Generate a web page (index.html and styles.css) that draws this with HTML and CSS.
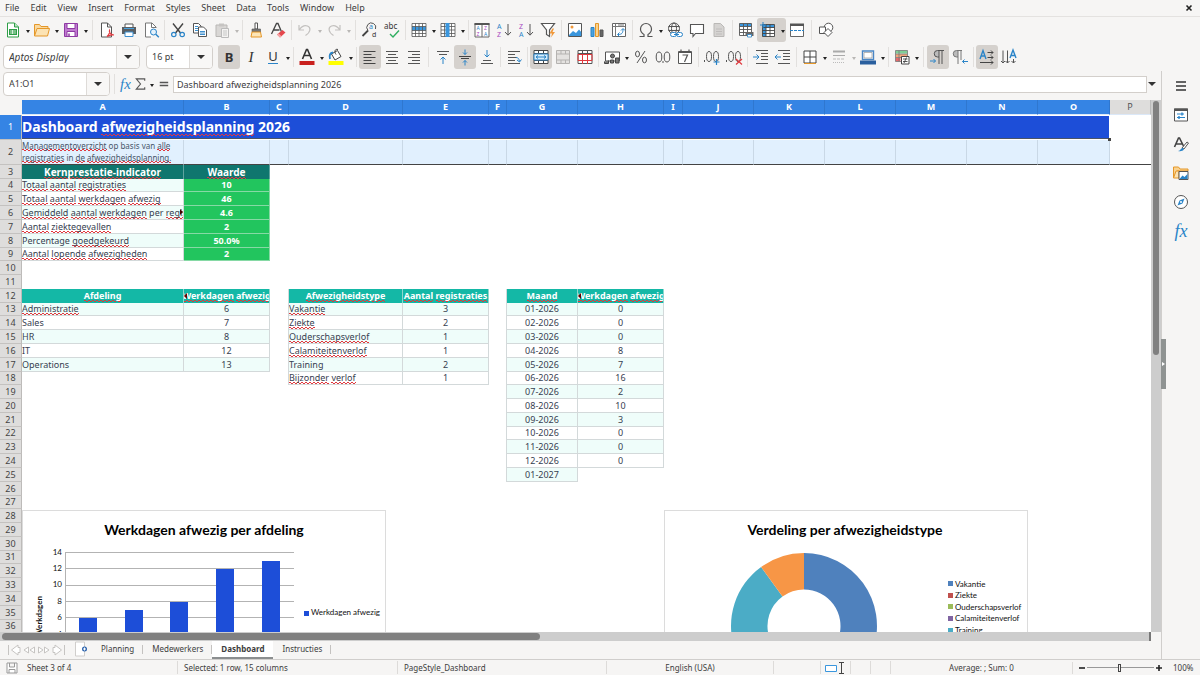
FILE: index.html
```html
<!DOCTYPE html>
<html lang="nl">
<head>
<meta charset="utf-8">
<meta name="viewport" content="width=device-width, initial-scale=1">
<title>Dashboard afwezigheidsplanning 2026</title>
<link rel="stylesheet" href="styles.css">
</head>
<body>
<div class="app">
<header class="menubar">
<nav class="menus"><button>File</button><button>Edit</button><button>View</button><button>Insert</button><button>Format</button><button>Styles</button><button>Sheet</button><button>Data</button><button>Tools</button><button>Window</button><button>Help</button></nav>
<button class="close" aria-label="Close"><svg width="8" height="8" viewBox="0 0 8 8"><path d="M1.500 1.500l5 5M6.500 1.500l-5 5" stroke="#222" stroke-width="1.600"/></svg></button>
</header>

<div class="toolbar standard" role="toolbar" aria-label="Standard">
<button class="tb" aria-label="New"><svg viewBox="0 0 18 18"><path d="M3.500 2h7l4 4v10h-11z" fill="#fff" stroke="#2e9e47"/><path d="M10.500 2v4h4" fill="#b7e3bf" stroke="#2e9e47"/><path d="M5 8h8v6H5z" fill="#2e9e47"/><path d="M6 10h6M6 12h6M8.500 9v4" stroke="#fff" stroke-width=".7"/></svg></button><button class="dd" aria-label="New options"></button>
<button class="tb" aria-label="Open"><svg viewBox="0 0 18 18"><path d="M1.500 15V3.500h5l1.500 2h7V8" fill="#f9d9a0" stroke="#e59728"/><path d="M1.500 15L4 7.500h12.500L14.500 15z" fill="#fce3b4" stroke="#e59728"/></svg></button><button class="dd" aria-label="Open options"></button>
<button class="tb" aria-label="Save"><svg viewBox="0 0 18 18"><path d="M2.500 2.500h13v13h-13z" fill="#c07bd0" stroke="#8e3aa3"/><path d="M5 2.500h8v5H5zM5 10.500h8v5H5z" fill="#fff" stroke="#8e3aa3"/><path d="M7 12.500v3" stroke="#8e3aa3" stroke-width="1.500"/></svg></button><button class="dd" aria-label="Save options"></button>
<i class="sep wide"></i>
<button class="tb" aria-label="Export as PDF"><svg viewBox="0 0 18 18"><path d="M3.500 2h6l4 4v10h-10z" fill="#fff" stroke="#555"/><path d="M9.500 2v4h4" fill="none" stroke="#555"/><path d="M9 15.500c2-2 3-4 2.500-6-.8 2 1.500 4 4.500 4.500-3-.5-5 .2-7 1.500z" fill="none" stroke="#e23a3f" stroke-width="1.200"/></svg></button>
<button class="tb" aria-label="Print"><svg viewBox="0 0 18 18"><path d="M5 6V3h8v3" fill="#fff" stroke="#555"/><path d="M2 6h14v7H2z" fill="#5a5e62"/><path d="M4 7.500h10" stroke="#4aa3df"/><path d="M5 11h8v4.500H5z" fill="#fff" stroke="#3a8fd0"/></svg></button>
<button class="tb" aria-label="Print preview"><svg viewBox="0 0 18 18"><path d="M14 7V6l-4-4H3.500v14H9" fill="#fff" stroke="#777"/><path d="M9.500 2v4.500H14" fill="none" stroke="#777"/><circle cx="11.500" cy="11" r="3" fill="#e4f2fc" stroke="#2a84c8"/><path d="M13.800 13.200l3 3" stroke="#2a84c8" stroke-width="1.400"/></svg></button>
<i class="sep"></i>
<button class="tb" aria-label="Cut"><svg viewBox="0 0 18 18"><path d="M4 2.500l7.500 9.500M14 2.500L6.500 12" stroke="#444" stroke-width="1.400"/><circle cx="4.800" cy="13.500" r="2.200" fill="none" stroke="#2a84c8" stroke-width="1.200"/><circle cx="13.200" cy="13.500" r="2.200" fill="none" stroke="#2a84c8" stroke-width="1.200"/></svg></button>
<button class="tb" aria-label="Copy"><svg viewBox="0 0 18 18"><path d="M2.500 2.500h5l2.500 2.500v7H2.500z" fill="#fff" stroke="#555"/><path d="M7.500 6h5l3 3v6.500h-8z" fill="#fff" stroke="#555"/><path d="M4 5.500h3M4 7.500h3M4 9.500h3M9 10.500h5M9 12h5M9 13.500h5" stroke="#2a84c8" stroke-width=".9"/></svg></button>
<button class="tb" aria-label="Paste"><svg viewBox="0 0 18 18"><path d="M3 4h11v11.500H3z" fill="#d9d7d5" stroke="#b9b7b5"/><path d="M6 2.500h5v3H6z" fill="#c6c4c2"/><path d="M8.500 7.500h7v9h-7z" fill="#f4f3f2" stroke="#bbb"/><path d="M10 10h4M10 12h4M10 14h4" stroke="#bbb" stroke-width=".8"/></svg></button><button class="dd off" aria-label="Paste options"></button>
<i class="sep"></i>
<button class="tb" aria-label="Clone formatting"><svg viewBox="0 0 18 18"><path d="M8 2h2.500v6H8z" fill="#fff" stroke="#555"/><path d="M5 8h8.500v3H5z" fill="#777" stroke="#555" stroke-width=".6"/><path d="M5 11h8.500l1 5H4z" fill="#fde6b8" stroke="#e59728"/></svg></button>
<button class="tb" aria-label="Clear formatting"><svg viewBox="0 0 18 18"><path d="M2.500 13L7.500 2.500h1.500L13 12M4.500 9h6" fill="none" stroke="#444" stroke-width="1.300"/><path d="M8 13.500l5.500-4.500 3 2.500-5.500 5z" fill="#e5484d"/><path d="M8 13.500l3 3 1.500-1.200-3-3z" fill="#f6a5a7"/></svg></button>
<i class="sep"></i>
<button class="tb" aria-label="Undo"><svg viewBox="0 0 18 18"><path d="M3 4v5h5M3.500 8.500C6 5 9 4 11.500 5c3.500 1.500 3.500 6-2 9.500" fill="none" stroke="#c3c1bf" stroke-width="1.200"/></svg></button><button class="dd off" aria-label="Undo list"></button>
<button class="tb" aria-label="Redo"><svg viewBox="0 0 18 18"><path d="M15 4v5h-5M14.500 8.500C12 5 9 4 6.500 5c-3.500 1.500-3.500 6 2 9.500" fill="none" stroke="#c3c1bf" stroke-width="1.200"/></svg></button><button class="dd off" aria-label="Redo list"></button>
<i class="sep wide"></i>
<button class="tb" aria-label="Find and replace"><svg viewBox="0 0 18 18"><path d="M7 9.500A4.500 4.500 0 1 1 14.500 8" fill="none" stroke="#555"/><path d="M7 9.500L1.500 15" stroke="#444" stroke-width="1.800"/><text x="8" y="8" class="gb">a</text><text x="11" y="16" class="gk">d</text></svg></button>
<button class="tb" aria-label="Spelling"><svg viewBox="0 0 18 18"><text x="1" y="8" class="abc">abc</text><path d="M7 13l3 3 6-6.500" fill="none" stroke="#2fae60" stroke-width="1.400"/></svg></button>
<i class="sep"></i>
<button class="tb" aria-label="Row"><svg viewBox="0 0 18 18"><path d="M2 2.500h14v13H2z" fill="#fff"/><path d="M2 5.500h14v4H2z" fill="#3a96dd"/><path d="M2 2.500h14v13H2zM2 5.500h14M2 9.500h14M2 12.500h14M5.500 2.500v13M9 2.500v13M12.500 2.500v13" fill="none" stroke="#555" stroke-width=".8"/></svg></button><button class="dd" aria-label="Row options"></button>
<button class="tb" aria-label="Column"><svg viewBox="0 0 18 18"><path d="M2 2.500h14v13H2z" fill="#fff"/><path d="M2 2.500h14v13H2zM2 5.500h14M2 9h14M2 12.500h14M5.500 2.500v13M12.500 2.500v13" fill="none" stroke="#555" stroke-width=".8"/><path d="M6.500 2h4v14h-4z" fill="#3a96dd"/></svg></button><button class="dd" aria-label="Column options"></button>
<i class="sep"></i>
<button class="tb" aria-label="Sort"><svg viewBox="0 0 18 18"><path d="M2 2.500h14v13.500H2zM9 2.500V16" fill="#fff" stroke="#666"/><path d="M1.500 2h15v2h-15z" fill="#555"/><text x="3.500" y="9" class="sb">A</text><text x="3.500" y="15" class="sv">Z</text><text x="11" y="9" class="sv">Z</text><text x="11" y="15" class="sb">A</text></svg></button>
<button class="tb" aria-label="Sort ascending"><svg viewBox="0 0 18 18"><text x="2" y="8" class="gb">A</text><text x="2" y="16" class="gv">Z</text><path d="M13 3v11M10 11l3 3.200 3-3.200" fill="none" stroke="#555"/></svg></button>
<button class="tb" aria-label="Sort descending"><svg viewBox="0 0 18 18"><text x="2" y="8" class="gv">Z</text><text x="2" y="16" class="gb">A</text><path d="M13 3v11M10 11l3 3.200 3-3.200" fill="none" stroke="#555"/></svg></button>
<button class="tb" aria-label="AutoFilter"><svg viewBox="0 0 18 18"><path d="M2.500 2.500h13L10.500 9v6.500l-3-2V9z" fill="#fff" stroke="#555" stroke-width="1.200"/><path d="M13.500 7.500l-3 5h2.500l-1 4 4-5.500h-2.500l1.500-3.500z" fill="#f0983a"/></svg></button>
<i class="sep"></i>
<button class="tb" aria-label="Insert image"><svg viewBox="0 0 18 18"><path d="M2.500 2.500h13v13h-13z" fill="#fff" stroke="#555"/><path d="M3 14l4-4 3 2 3-3.500 2.200 2.500V15H3z" fill="#3a96dd"/><circle cx="6" cy="6" r="1.500" fill="#f0983a"/></svg></button>
<button class="tb" aria-label="Insert chart"><svg viewBox="0 0 18 18"><path d="M3 6.500h3v9H3z" fill="#4aa3df" stroke="#2a84c8"/><path d="M7.500 2.500h3v13h-3z" fill="#fbd38d" stroke="#e59728"/><path d="M12 9h3v6.500h-3z" fill="#666" stroke="#555"/></svg></button>
<button class="tb" aria-label="Pivot table"><svg viewBox="0 0 18 18"><path d="M2.500 2.500h13v13h-13z" fill="#fff" stroke="#666"/><path d="M2.500 5.500h13M5.500 2.500v13M8 4h6" stroke="#777"/><path d="M8 13.500c4 0 5-1.500 5-5.500M11 9.500l2-2 2 2M9.500 11.500l-2 2 2 2" fill="none" stroke="#2a84c8"/></svg></button>
<i class="sep"></i>
<button class="tb" aria-label="Special character"><svg viewBox="0 0 18 18"><path d="M2.500 15.500h4.500v-2C4.500 12 3.500 10 3.500 8a5.500 5.500 0 0 1 11 0c0 2-1 4-3.500 5.500v2h4.500" fill="none" stroke="#555" stroke-width="1.200"/></svg></button><button class="dd" aria-label="Special characters"></button>
<button class="tb" aria-label="Hyperlink"><svg viewBox="0 0 18 18"><circle cx="8" cy="7.500" r="5.500" fill="none" stroke="#555"/><ellipse cx="8" cy="7.500" rx="2.500" ry="5.500" fill="none" stroke="#555"/><path d="M2.500 5.500h11M2.500 9.500h11" stroke="#555"/><rect x="4.500" y="11.500" width="6" height="4" rx="2" fill="#fff" stroke="#2a84c8"/><rect x="10.500" y="11.500" width="6" height="4" rx="2" fill="#fff" stroke="#2a84c8"/><path d="M8 13.500h5" stroke="#2a84c8"/></svg></button>
<button class="tb" aria-label="Comment"><svg viewBox="0 0 18 18"><path d="M2.500 3.500h13v9H7.500L5 15.500v-3H2.500z" fill="#fff" stroke="#555" stroke-width="1.100"/></svg></button>
<button class="tb" aria-label="Headers and footers"><svg viewBox="0 0 18 18"><path d="M4 2.500h6.500L14 6v9.500H4z" fill="#d5d3d1" stroke="#bab8b6"/><path d="M6 8h6M6 10.500h6M6 13h6" stroke="#bab8b6" stroke-width=".8"/></svg></button>
<i class="sep"></i>
<button class="tb" aria-label="Print area"><svg viewBox="0 0 18 18"><path d="M2.500 2.500h12v12h-12z" fill="#fff"/><path d="M2.500 2.500h12v3h-12z" fill="#3a96dd"/><path d="M2.500 2.500h12v12h-12zM2.500 5.500h12M2.500 8.500h12M2.500 11.500h12M6.500 2.500v12M10.500 2.500v12" fill="none" stroke="#555" stroke-width=".9"/><path d="M8.500 11h8v4h-8z" fill="#666"/><path d="M10.500 13.500h4V16h-4z" fill="#fff" stroke="#2a84c8" stroke-width=".8"/></svg></button>
<span class="pair on"><button class="tb" aria-label="Freeze rows and columns"><svg viewBox="0 0 18 18"><path d="M3.500 3.500h12v12h-12z" fill="#fff"/><path d="M3.500 3.500h12v3h-12zM3.500 3.500h3.500v12H3.500z" fill="#3a96dd"/><path d="M3.500 3.500h12v12h-12zM3.500 6.500h12M3.500 9.500h12M3.500 12.500h12M7 3.500v12M11 3.500v12" fill="none" stroke="#444" stroke-width=".9"/><path d="M4 1v6M1 4h6" stroke="#2a84c8"/></svg></button><button class="dd" aria-label="Freeze options"></button></span>
<button class="tb" aria-label="Split window"><svg viewBox="0 0 18 18"><path d="M2.500 3.500h13v12h-13z" fill="#fff" stroke="#666"/><path d="M2 2.500h14v2.500H2z" fill="#555"/><path d="M2 9.500h14" stroke="#2a84c8" stroke-dasharray="3 1"/></svg></button>
<i class="sep wide"></i>
<button class="tb" aria-label="Show draw functions"><svg viewBox="0 0 18 18"><circle cx="11.500" cy="6.500" r="4.300" fill="#fff" stroke="#555"/><path d="M2.500 6h6v6.500h-6z" fill="#fff" stroke="#555"/><path d="M11 7.500l4 4-4 4-4-4z" fill="#fff" stroke="#555"/></svg></button>
</div>

<div class="toolbar formatting" role="toolbar" aria-label="Formatting">
<div class="combo face"><input class="italic" type="text" value="Aptos Display" aria-label="Font name"><button aria-label="Fonts"></button></div>
<div class="combo size"><input type="text" value="16 pt" aria-label="Font size"><button aria-label="Sizes"></button></div>
<button class="tb on letter" aria-label="Bold"><b>B</b></button><button class="tb letter serif" aria-label="Italic">I</button><button class="tb letter" aria-label="Underline"><span class="under">U</span></button><button class="dd" aria-label="Underline styles"></button>
<i class="sep"></i>
<button class="tb" aria-label="Font color"><svg viewBox="0 0 18 18"><path d="M4.500 11L8.500 1.500h1L13.500 11M6 7.500h6" fill="none" stroke="#333" stroke-width="1.600"/><path d="M1.500 13h15v4h-15z" fill="#c9211e"/></svg></button><button class="dd" aria-label="Font colors"></button>
<button class="tb" aria-label="Background color"><svg viewBox="0 0 18 18"><path d="M4.500 6l6-3.500 3.500 6-6 3.500z" fill="#fff" stroke="#444"/><path d="M11 1.500c-3-1-4 2-2 5" fill="none" stroke="#444"/><path d="M6 4.500C3 5 2 7 3 11" fill="none" stroke="#2a84c8" stroke-width="1.800"/><path d="M1.500 13h15v4h-15z" fill="#ffff00"/></svg></button><button class="dd" aria-label="Background colors"></button>
<i class="sep"></i>
<button class="tb on" aria-label="Align left"><svg viewBox="0 0 18 18"><path d="M2.500 3.500h12M2.500 6.500h8M2.500 9.500h12M2.500 12.500h8M2.500 15.500h12" stroke="#444"/></svg></button>
<button class="tb" aria-label="Center"><svg viewBox="0 0 18 18"><path d="M3 3.500h12M5 6.500h8M3 9.500h12M5 12.500h8M3 15.500h12" stroke="#555"/></svg></button>
<button class="tb" aria-label="Align right"><svg viewBox="0 0 18 18"><path d="M3 3.500h12M7 6.500h8M3 9.500h12M7 12.500h8M3 15.500h12" stroke="#555"/></svg></button>
<i class="sep wide"></i>
<button class="tb" aria-label="Align top"><svg viewBox="0 0 18 18"><path d="M3 3.500h12M5 6.500h8" stroke="#555"/><path d="M9 16V9M6.500 11.500L9 9l2.500 2.500" fill="none" stroke="#2a84c8"/></svg></button>
<button class="tb on" aria-label="Center vertically"><svg viewBox="0 0 18 18"><path d="M3 8.500h12M5 10.500h8" stroke="#444"/><path d="M9 1.500v5M7 4.500l2 2 2-2M9 17.500v-5M7 14.500l2-2 2 2" fill="none" stroke="#2a84c8"/></svg></button>
<button class="tb" aria-label="Align bottom"><svg viewBox="0 0 18 18"><path d="M5 12.500h8M3 15.500h12" stroke="#555"/><path d="M9 2v7M6.500 6.500L9 9l2.500-2.500" fill="none" stroke="#2a84c8"/></svg></button>
<i class="sep"></i>
<button class="tb" aria-label="Wrap text"><svg viewBox="0 0 18 18"><path d="M3 3.500h12M3 6.500h7M3 9.500h9M3 12.500h7M3 15.500h12" stroke="#555"/><path d="M11 9.500c2 0 3 1 3.500 4M12 12l2.500 2 2-2.500" fill="none" stroke="#2a84c8"/></svg></button>
<i class="sep"></i>
<button class="tb on" aria-label="Merge and center"><svg viewBox="0 0 18 18"><path d="M2 2.500h14v13H2z" fill="#fff" stroke="#444"/><path d="M2 5.500h14M2 12.500h14M6.500 2.500v3M11.500 2.500v3M6.500 12.500v3M11.500 12.500v3" stroke="#444"/><path d="M2 6h14v6H2z" fill="#d6ecfa" stroke="#2a84c8"/><path d="M4 9h10M6 7.500L4 9l2 1.500M12 7.500L14 9l-2 1.500" fill="none" stroke="#2a84c8"/></svg></button>
<button class="tb" aria-label="Merge cells"><svg viewBox="0 0 18 18"><path d="M2.500 2.500h13v13h-13z" fill="#e4e2e0" stroke="#b5b3b1"/><path d="M2.500 6h13M2.500 12h13M7 2.500V6M11.500 2.500V6M7 12v3.500M11.500 12v3.500" stroke="#b5b3b1"/></svg></button>
<button class="tb" aria-label="Split cells"><svg viewBox="0 0 18 18"><path d="M2 2.500h14v13H2z" fill="#fff" stroke="#555"/><path d="M2 5.500h14M6.500 2.500v3M11.500 2.500v3" stroke="#555"/><path d="M2 6.500h14v6H2zM6.500 6v10M11.500 6v10" fill="none" stroke="#e0393e"/></svg></button>
<i class="sep"></i>
<button class="tb" aria-label="Currency"><svg viewBox="0 0 18 18"><path d="M2.500 4h14v9h-14z" fill="#fff" stroke="#555"/><circle cx="9.500" cy="8" r="2" fill="#777" stroke="#444"/><path d="M1.500 13.500v2h4v-3M7.500 15v-3h3v3zM12.500 15v-5h3.500v5z" fill="#777" stroke="#444"/></svg></button><button class="dd" aria-label="Currencies"></button>
<button class="tb" aria-label="Percent"><svg viewBox="0 0 18 18"><ellipse cx="5.500" cy="6" rx="2" ry="2.800" fill="none" stroke="#555"/><ellipse cx="12.500" cy="12" rx="2" ry="2.800" fill="none" stroke="#555"/><path d="M13 3L5 15" stroke="#555"/></svg></button>
<button class="tb" aria-label="Number"><svg viewBox="0 0 18 18"><ellipse cx="5" cy="9" rx="2.800" ry="5" fill="none" stroke="#555"/><ellipse cx="13" cy="9" rx="2.800" ry="5" fill="none" stroke="#555"/><path d="M9 13v2" stroke="#555"/></svg></button>
<button class="tb" aria-label="Date"><svg viewBox="0 0 18 18"><path d="M2.500 3.500h13v12h-13z" fill="#fff" stroke="#555"/><path d="M2.500 4.500h13M5 1.500v3M13 1.500v3" stroke="#555" stroke-width="1.200"/><path d="M6.500 7h5l-3 7" fill="none" stroke="#555" stroke-width="1.200"/></svg></button>
<i class="sep"></i>
<button class="tb" aria-label="Add decimal place"><svg viewBox="0 0 18 18"><path d="M1.500 12v2" stroke="#555"/><ellipse cx="6" cy="8.500" rx="2.500" ry="5" fill="none" stroke="#555"/><ellipse cx="13" cy="8.500" rx="2.500" ry="5" fill="none" stroke="#555"/><path d="M13.500 11v6M10.500 14h6" stroke="#2a84c8" stroke-width="1.200"/></svg></button>
<button class="tb" aria-label="Delete decimal place"><svg viewBox="0 0 18 18"><path d="M1.500 12v2" stroke="#555"/><ellipse cx="6" cy="8.500" rx="2.500" ry="5" fill="none" stroke="#555"/><ellipse cx="13" cy="8.500" rx="2.500" ry="5" fill="none" stroke="#555"/><path d="M11 11l6 5.500M17 11l-6 5.500" stroke="#e0393e" stroke-width="1.200"/></svg></button>
<i class="sep"></i>
<button class="tb" aria-label="Increase indent"><svg viewBox="0 0 18 18"><path d="M4 2.500h12M9 5.500h7M9 8.500h7M9 11.500h7M4 15.500h12" stroke="#555"/><path d="M1 9h6M4.500 6.500L7 9l-2.500 2.500" fill="none" stroke="#2a84c8"/></svg></button>
<button class="tb" aria-label="Decrease indent"><svg viewBox="0 0 18 18"><path d="M4 2.500h12M9 5.500h7M9 8.500h7M9 11.500h7M4 15.500h12" stroke="#555"/><path d="M7 9H1M3.500 6.500L1 9l2.500 2.500" fill="none" stroke="#2a84c8"/></svg></button>
<i class="sep"></i>
<button class="tb" aria-label="Borders"><svg viewBox="0 0 18 18"><path d="M3 3h12v12H3zM9 3v12M3 9h12" fill="#fff" stroke="#444"/><path d="M3 15.500h12" stroke="#e59728"/></svg></button><button class="dd" aria-label="Border options"></button>
<button class="tb" aria-label="Border style"><svg viewBox="0 0 18 18"><path d="M3 3.500h12" stroke="#aaa" stroke-width="2"/><path d="M3 7.500h12" stroke="#aaa"/><path d="M3 11h12" stroke="#bbb" stroke-dasharray="3 1"/><path d="M3 14.500h12" stroke="#bbb" stroke-dasharray="1 1"/></svg></button><button class="dd off" aria-label="Border styles"></button>
<button class="tb" aria-label="Border color"><svg viewBox="0 0 18 18"><path d="M3.500 3h11v8.500h-11z" fill="#fff" stroke="#4a86c5" stroke-width="1.400"/><path d="M5 4.500h8v5.500H5z" fill="none" stroke="#888" stroke-width=".6"/><path d="M1 12.500h16v4H1z" fill="#2a5f9e"/></svg></button><button class="dd" aria-label="Border colors"></button>
<i class="sep"></i>
<button class="tb" aria-label="Conditional formatting"><svg viewBox="0 0 18 18"><path d="M2.500 2.500h12v11h-12z" fill="#fff"/><path d="M2.500 2.500h12v3h-12z" fill="#7fcf95"/><path d="M2.500 6h12v3.500h-12z" fill="#f3a47a"/><path d="M2.500 10h5v3.500h-5z" fill="#e9686b"/><path d="M2.500 2.500h12v11h-12zM2.500 6h12M2.500 9.500h12M6 2.500v11" fill="none" stroke="#777" stroke-width=".8"/><path d="M8.500 8.500h7.500V16H8.500z" fill="#fff" stroke="#444"/><path d="M10 11h4.500M10 13.500h4.500M13.500 9.500l-2.500 5.500" stroke="#444" stroke-width=".9"/></svg></button><button class="dd" aria-label="Conditional formats"></button>
<i class="sep wide"></i>
<button class="tb on" aria-label="Left-to-right"><svg viewBox="0 0 18 18"><path d="M10 2.500H8.500a3.200 3.200 0 0 0 0 6.500H10z" fill="#bbb"/><path d="M15 2.500H8.500a3.200 3.200 0 0 0 0 6.500H10M10 3v13M13 3v13" fill="none" stroke="#555"/><path d="M1 13h5.500M4.500 11l2 2-2 2" fill="none" stroke="#2a84c8"/></svg></button>
<button class="tb" aria-label="Right-to-left"><svg viewBox="0 0 18 18"><path d="M7 2.500H5.500a3.200 3.200 0 0 0 0 6.500H7z" fill="#bbb"/><path d="M11 2.500H5.500a3.200 3.200 0 0 0 0 6.500H7M7 3v13M10 3v9" fill="none" stroke="#777"/><path d="M17 13.500h-5.500M13.500 11.500l-2 2 2 2" fill="none" stroke="#2a84c8"/></svg></button>
<i class="sep"></i>
<button class="tb on" aria-label="Horizontal text"><svg viewBox="0 0 18 18"><path d="M2 11L5 2.500 8 11M3 8h4" fill="none" stroke="#2a84c8" stroke-width="1.400"/><path d="M9.500 4.500H15M13 2.500l2 2-2 2M9.500 9.500H15M13 7.500l2 2-2 2M2 14.500h13M13 12.500l2 2-2 2" fill="none" stroke="#444"/></svg></button>
<button class="tb" aria-label="Vertical text"><svg viewBox="0 0 18 18"><path d="M10 10l3-8 3 8M11 7.500h4" fill="none" stroke="#2a84c8" stroke-width="1.400"/><path d="M3 2.500V15M1 13l2 2 2-2M7.500 2.500V15M5.500 13l2 2 2-2M13.500 11v4M11.500 13l2 2 2-2" fill="none" stroke="#555"/></svg></button>
</div>

<div class="work">
<main class="main">
<div class="formula">
<div class="combo name"><input type="text" value="A1:O1" aria-label="Name box"><button aria-label="Named ranges"></button></div>
<i class="sep"></i>
<button class="fbtn fx" aria-label="Function wizard">fx</button>
<button class="fbtn" aria-label="Select function"><svg viewBox="0 0 16 16"><path d="M12.500 4.500v-2h-9L8 8l-4.500 5.500h9v-2" fill="none" stroke="#555" stroke-width="1.200"/></svg></button><button class="dd" aria-label="Functions"></button>
<button class="fbtn eq" aria-label="Formula"><svg viewBox="0 0 16 16"><path d="M4 6.500h9M4 9.500h9" stroke="#555" stroke-width="1.600"/></svg></button>
<input class="finput" type="text" value="Dashboard afwezigheidsplanning 2026" aria-label="Input line">
<button class="expand" aria-label="Expand formula bar"></button>
</div>

<div class="grid-area">
<div class="viewport">
<table class="sheet">
<colgroup><col class="w22"><col class="w162"><col class="w86"><col class="w19"><col class="w114"><col class="w86"><col class="w18"><col class="w71"><col class="w86"><col class="w19"><col class="w71"><col class="w71"><col class="w71"><col class="w71"><col class="w71"><col class="w72"><col></colgroup>
<thead><tr><td class="corner"></td><th>A</th><th>B</th><th>C</th><th>D</th><th>E</th><th>F</th><th>G</th><th>H</th><th>I</th><th>J</th><th>K</th><th>L</th><th>M</th><th>N</th><th>O</th><th class="plain">P</th></tr></thead>
<tbody>
<tr class="r1"><th class="sel">1</th><td colspan="15" class="title">Dashboard <u>afwezigheidsplanning</u> 2026<span class="handle"></span></td><td></td></tr>
<tr class="r2"><th>2</th><td class="note"><u>Managementoverzicht</u> op basis van <u>alle</u> <u>registraties</u> in <u>de</u> <u>afwezigheidsplanning.</u></td><td class="n"></td><td class="n"></td><td class="n"></td><td class="n"></td><td class="n"></td><td class="n"></td><td class="n"></td><td class="n"></td><td class="n"></td><td class="n"></td><td class="n"></td><td class="n"></td><td class="n"></td><td class="n"></td><td></td></tr>
<tr><th>3</th><td class="kh"><u>Kernprestatie-indicator</u></td><td class="kh"><u>Waarde</u></td><td colspan="14"></td></tr>
<tr><th>4</th><td class="c band"><u>Totaal</u> <u>aantal</u> <u>registraties</u></td><td class="kv">10</td><td colspan="14"></td></tr>
<tr><th>5</th><td class="c"><u>Totaal</u> <u>aantal</u> <u>werkdagen</u> <u>afwezig</u></td><td class="kv">46</td><td colspan="14"></td></tr>
<tr><th>6</th><td class="c band more"><u>Gemiddeld</u> <u>aantal</u> <u>werkdagen</u> per <u>registratie</u></td><td class="kv">4.6</td><td colspan="14"></td></tr>
<tr><th>7</th><td class="c"><u>Aantal</u> <u>ziektegevallen</u></td><td class="kv">2</td><td colspan="14"></td></tr>
<tr><th>8</th><td class="c band">Percentage <u>goedgekeurd</u></td><td class="kv">50.0%</td><td colspan="14"></td></tr>
<tr><th>9</th><td class="c"><u>Aantal</u> <u>lopende</u> <u>afwezigheden</u></td><td class="kv">2</td><td colspan="14"></td></tr>
<tr><th>10</th><td colspan="16"></td></tr>
<tr><th>11</th><td colspan="16"></td></tr>
<tr><th>12</th><td class="h"><u>Afdeling</u></td><td class="h less"><span><u>Werkdagen</u> <u>afwezig</u></span></td><td class="gap"></td><td class="h"><u>Afwezigheidstype</u></td><td class="h"><u>Aantal</u> <u>registraties</u></td><td class="gap"></td><td class="h"><u>Maand</u></td><td class="h less"><span><u>Werkdagen</u> <u>afwezig</u></span></td><td colspan="8"></td></tr>
<tr><th>13</th><td class="c band"><u>Administratie</u></td><td class="c band m">6</td><td class="gap"></td><td class="c band"><u>Vakantie</u></td><td class="c band m">3</td><td class="gap"></td><td class="c band m">01-2026</td><td class="c band m">0</td><td colspan="8"></td></tr>
<tr><th>14</th><td class="c">Sales</td><td class="c m">7</td><td class="gap"></td><td class="c"><u>Ziekte</u></td><td class="c m">2</td><td class="gap"></td><td class="c m">02-2026</td><td class="c m">0</td><td colspan="8"></td></tr>
<tr><th>15</th><td class="c band">HR</td><td class="c band m">8</td><td class="gap"></td><td class="c band"><u>Ouderschapsverlof</u></td><td class="c band m">1</td><td class="gap"></td><td class="c band m">03-2026</td><td class="c band m">0</td><td colspan="8"></td></tr>
<tr><th>16</th><td class="c">IT</td><td class="c m">12</td><td class="gap"></td><td class="c"><u>Calamiteitenverlof</u></td><td class="c m">1</td><td class="gap"></td><td class="c m">04-2026</td><td class="c m">8</td><td colspan="8"></td></tr>
<tr><th>17</th><td class="c band">Operations</td><td class="c band m">13</td><td class="gap"></td><td class="c band">Training</td><td class="c band m">2</td><td class="gap"></td><td class="c band m">05-2026</td><td class="c band m">7</td><td colspan="8"></td></tr>
<tr><th>18</th><td colspan="2"></td><td class="gap"></td><td class="c"><u>Bijzonder</u> <u>verlof</u></td><td class="c m">1</td><td class="gap"></td><td class="c m">06-2026</td><td class="c m">16</td><td colspan="8"></td></tr>
<tr><th>19</th><td colspan="5"></td><td class="gap"></td><td class="c band m">07-2026</td><td class="c band m">2</td><td colspan="8"></td></tr>
<tr><th>20</th><td colspan="5"></td><td class="gap"></td><td class="c m">08-2026</td><td class="c m">10</td><td colspan="8"></td></tr>
<tr><th>21</th><td colspan="5"></td><td class="gap"></td><td class="c band m">09-2026</td><td class="c band m">3</td><td colspan="8"></td></tr>
<tr><th>22</th><td colspan="5"></td><td class="gap"></td><td class="c m">10-2026</td><td class="c m">0</td><td colspan="8"></td></tr>
<tr><th>23</th><td colspan="5"></td><td class="gap"></td><td class="c band m">11-2026</td><td class="c band m">0</td><td colspan="8"></td></tr>
<tr><th>24</th><td colspan="5"></td><td class="gap"></td><td class="c m">12-2026</td><td class="c m">0</td><td colspan="8"></td></tr>
<tr><th>25</th><td colspan="5"></td><td class="gap"></td><td class="c band m">01-2027</td><td colspan="9"></td></tr>
<tr><th>26</th><td colspan="16"></td></tr>
<tr><th>27</th><td colspan="16"></td></tr>
<tr><th>28</th><td colspan="16"></td></tr>
<tr><th>29</th><td colspan="16"></td></tr>
<tr><th>30</th><td colspan="16"></td></tr>
<tr><th>31</th><td colspan="16"></td></tr>
<tr><th>32</th><td colspan="16"></td></tr>
<tr><th>33</th><td colspan="16"></td></tr>
<tr><th>34</th><td colspan="16"></td></tr>
<tr><th>35</th><td colspan="16"></td></tr>
<tr><th>36</th><td colspan="16"></td></tr>
</tbody>
</table>

<svg class="chart bars" width="364" height="200" viewBox="0 0 364 200" role="img" aria-label="Werkdagen afwezig per afdeling">
<rect x=".5" y=".5" width="363" height="199" fill="#fff" stroke="#dcdcdc"/>
<text class="ct" x="182" y="25">Werkdagen afwezig per afdeling</text>
<path d="M43 42.500h229M43 58.500h229M43 75.500h229M43 91.500h229M43 107.500h229M43 124.500h229M43 140.500h229M43.500 42v115" fill="none" stroke="#b3b3b3"/>
<g fill="#1d4ed8"><rect x="57" y="108" width="18" height="49"/><rect x="103" y="100" width="18" height="57"/><rect x="148" y="92" width="18" height="65"/><rect x="194" y="59" width="18" height="98"/><rect x="240" y="51" width="18" height="106"/></g>
<g class="ax"><text x="40" y="45">14</text><text x="40" y="61">12</text><text x="40" y="77">10</text><text x="40" y="94">8</text><text x="40" y="110">6</text><text x="40" y="127">4</text></g>
<text class="yt" transform="translate(20 86) rotate(-90)">Werkdagen</text>
<rect x="282" y="101" width="5" height="5" fill="#1d4ed8"/><text class="lg" x="289" y="105">Werkdagen afwezig</text>
</svg>

<svg class="chart donut" width="364" height="200" viewBox="0 0 364 200" role="img" aria-label="Verdeling per afwezigheidstype">
<rect x=".5" y=".5" width="363" height="199" fill="#fff" stroke="#dcdcdc"/>
<text class="ct" x="181" y="25">Verdeling per afwezigheidstype</text>
<path fill="#4f81bd" d="M140 43A73 73 0 0 1 209.400 138.600L174.700 127.300A36.500 36.500 0 0 0 140 79.500z"/>
<path fill="#c0504d" d="M209.400 138.600A73 73 0 0 1 140 189V152.500A36.500 36.500 0 0 0 174.700 127.300z"/>
<path fill="#9bbb59" d="M140 189A73 73 0 0 1 97.100 175.100L118.500 145.500A36.500 36.500 0 0 0 140 152.500z"/>
<path fill="#8064a2" d="M97.100 175.100A73 73 0 0 1 70.600 138.600L105.300 127.300A36.500 36.500 0 0 0 118.500 145.500z"/>
<path fill="#4bacc6" d="M70.600 138.600A73 73 0 0 1 97.100 56.900L118.500 86.500A36.500 36.500 0 0 0 105.300 127.300z"/>
<path fill="#f79646" d="M97.100 56.900A73 73 0 0 1 140 43V79.500A36.500 36.500 0 0 0 118.500 86.500z"/>
<rect x="284" y="71" width="5" height="5" fill="#4f81bd"/><rect x="284" y="83" width="5" height="5" fill="#c0504d"/><rect x="284" y="94" width="5" height="5" fill="#9bbb59"/><rect x="284" y="106" width="5" height="5" fill="#8064a2"/><rect x="284" y="118" width="5" height="5" fill="#4bacc6"/>
<g class="lg"><text x="291" y="77">Vakantie</text><text x="291" y="88">Ziekte</text><text x="291" y="100">Ouderschapsverlof</text><text x="291" y="111">Calamiteitenverlof</text><text x="291" y="123">Training</text></g>
</svg>
</div>
<div class="vscroll"><span></span></div>
</div>
<div class="hscroll"><div class="track"><span></span></div></div>
<div class="tabs">
<div class="navs">
<button aria-label="First sheet"><svg viewBox="0 0 14 12"><path d="M1.500 1v10M11 1L4.500 6l6.500 5V8.500h2v-5h-2z" fill="#fff" stroke="#c6c4c2"/></svg></button>
<button aria-label="Previous sheet"><svg viewBox="0 0 14 12"><path d="M6.500 3L2 6l4.500 3zM12.500 3L8 6l4.500 3z" fill="#fff" stroke="#c6c4c2"/></svg></button>
<button aria-label="Next sheet"><svg viewBox="0 0 14 12"><path d="M1.500 3L6 6 1.500 9zM7.500 3L12 6 7.500 9z" fill="#fff" stroke="#c6c4c2"/></svg></button>
<button aria-label="Last sheet"><svg viewBox="0 0 14 12"><path d="M12.500 1v10M3 1l6.500 5L3 11V8.500H1v-5h2z" fill="#fff" stroke="#c6c4c2"/></svg></button>
</div>
<button class="add" aria-label="Add sheet"><svg viewBox="0 0 14 16"><path d="M1.500 1h9v14h-9z" fill="#fff" stroke="#d0cecc"/><circle cx="10.500" cy="8" r="2.500" fill="#2a62ad"/><path d="M10.500 6.500v3M9 8h3" stroke="#fff"/></svg></button>
<div class="tablist"><button>Planning</button><button>Medewerkers</button><button class="active">Dashboard</button><button>Instructies</button></div>
</div>
</main>
<aside class="sidebar">
<button class="grip" aria-label="Collapse sidebar"></button>
<button aria-label="Sidebar settings"><svg viewBox="0 0 18 18"><path d="M4 5h10M4 9h10M4 13h10" stroke="#333" stroke-width="1.600"/></svg></button>
<button aria-label="Properties"><svg viewBox="0 0 18 18"><path d="M2.500 3h13v12h-13z" fill="#fff" stroke="#555"/><path d="M2 2.500h14v2.500H2z" fill="#555"/><path d="M5 8h7M5 11.500h8" stroke="#2a84c8"/><path d="M10 6.500v3M7 10v3" stroke="#2a84c8" stroke-width="1.400"/></svg></button>
<button aria-label="Styles"><svg viewBox="0 0 18 18"><path d="M2.500 12L6.500 3h1L12 12M4 9h6" fill="none" stroke="#444" stroke-width="1.600"/><path d="M10 13l5-6 1.500 1L12 14z" fill="#fff" stroke="#555"/><path d="M6 16c3 0 2-3 5-3 2 1 0 4-5 3z" fill="#2a84c8"/></svg></button>
<button aria-label="Gallery"><svg viewBox="0 0 18 18"><path d="M1.500 14V3h5l1.500 2h8v2H5z" fill="#fad28f" stroke="#e59728"/><path d="M1.500 14L4 7h3v7z" fill="#fce3b4" stroke="#e59728"/><path d="M7 7.500h9v8H7z" fill="#fff" stroke="#555"/><path d="M7.500 15l3-3.500 2 1.500 3-3v5z" fill="#2a84c8"/></svg></button>
<button aria-label="Navigator"><svg viewBox="0 0 18 18"><circle cx="9" cy="9" r="6.500" fill="#fff" stroke="#555"/><path d="M12.500 5.500L10.500 10.500 5.500 12.500 7.500 7.500z" fill="#2a84c8"/><circle cx="9" cy="9" r="1" fill="#fff"/></svg></button>
<button class="fx big" aria-label="Functions">fx</button>
</aside>
</div>

<footer class="status">
<div class="disk"><svg width="12" height="12" viewBox="0 0 12 12"><path d="M1 1h10v10H1zM3.500 1v4h5V1M3 11V7.500h6V11" fill="#fff" stroke="#999"/></svg></div>
<div class="cell">Sheet 3 of 4</div>
<div class="cell line">Selected: 1 row, 15 columns</div>
<div class="cell line">PageStyle_Dashboard</div>
<div class="cell line mid">English (USA)</div>
<div class="cell line"></div>
<div class="cell line mid"><svg width="22" height="14" viewBox="0 0 22 14"><path d="M.5 4.500h11v6H.5z" fill="#fff" stroke="#3a96dd"/><path d="M14 1.500h5M14 12.500h5M16.500 1.500v11" stroke="#444"/></svg></div>
<div class="cell line"></div>
<div class="cell line"></div>
<div class="cell line mid">Average: ; Sum: 0</div>
<div class="zoom"><button aria-label="Zoom out"><svg width="8" height="8" viewBox="0 0 8 8"><path d="M1 4h6" stroke="#222" stroke-width="1.600"/></svg></button><input type="range" min="0" max="100" value="48" aria-label="Zoom"><button aria-label="Zoom in"><svg width="8" height="8" viewBox="0 0 8 8"><path d="M1 4h6M4 1v6" stroke="#222" stroke-width="1.600"/></svg></button></div>
<div class="cell pct">100%</div>
</footer>
</div>
</body>
</html>
```

FILE: styles.css
```css
* { box-sizing: border-box; }
html, body { height: 100%; }
body {
  margin: 0;
  background: #f6f5f4;
  color: #3d3d3d;
  font-family: "Noto Sans", "Open Sans", sans-serif;
  font-size: 9px;
  line-height: 12px;
}
button, input { font: inherit; color: inherit; margin: 0; padding: 0; border: 0; background: none; outline: 0; }
button { display: flex; align-items: center; justify-content: center; flex: none; }
svg { display: block; }
.app { display: flex; flex-direction: column; height: 100vh; min-height: 400px; overflow: hidden; }

/* Menu bar */
.menubar { display: flex; justify-content: space-between; height: 17px; padding: 0 7px 0 5px; border-bottom: 1px solid #e4e2e0; flex: none; }
.menus { display: flex; gap: 11px; }

/* Toolbars */
.toolbar { display: flex; align-items: center; flex: none; padding-left: 2px; }
.standard { height: 26px; }
.formatting { height: 28px; padding-left: 3px; }
.tb { width: 22px; height: 24px; border-radius: 3px; }
.tb svg { width: 18px; height: 18px; }
.on { background: #d5d1cd; border-radius: 3px; }
.pair { display: flex; align-items: center; flex: none; }
.dd { width: 7px; height: 24px; }
.dd::before { content: ""; border: 2px solid transparent; border-top: 3px solid #222; border-bottom: 0; margin-top: 3px; }
.dd.off::before { border-top-color: #b9b7b5; }
.sep { width: 1px; height: 20px; margin: 0 2px; background: #e2e0de; flex: none; }
.sep.wide { margin: 0 3px; }
.letter { font-size: 13px; color: #333; }
.serif { font-family: "Liberation Serif", serif; font-style: italic; font-size: 15px; }
.under { border-bottom: 1px solid #2a84c8; line-height: 13px; }
.gb, .gk, .gv, .abc { font-size: 7px; fill: #2a84c8; }
.gk, .abc { fill: #333; }
.abc { font-size: 8px; }
.gv, .sv { fill: #a64ac0; }
.sb, .sv { font-size: 5px; }
.sb { fill: #2a84c8; }

.combo { display: flex; height: 24px; border: 1px solid #d3cfcb; border-radius: 4px; background: #fff; overflow: hidden; flex: none; }
.combo input { flex: 1; min-width: 0; padding-left: 5px; }
.combo button { width: 23px; background: #f8f7f6; border-left: 1px solid #dedbd8; }
.combo button::before, .expand::before { content: ""; border: 4px solid transparent; border-top: 4px solid #333; border-bottom: 0; }
.face { width: 137px; margin-right: 6px; font-size: 10px; }
.size { width: 67px; margin-right: 5px; }
.name { width: 107px; }
.italic { font-style: italic; }

/* Work area */
.work { display: flex; flex: 1; min-height: 0; }
.main { display: flex; flex-direction: column; flex: 1; min-width: 0; }
.formula { display: flex; align-items: center; height: 29px; padding: 0 4px 3px 3px; flex: none; }
.formula .sep { margin: 0 3px 0 4px; }
.fbtn { width: 15px; height: 20px; }
.fbtn svg { width: 15px; height: 16px; }
.fx { font-family: "Liberation Serif", serif; font-style: italic; font-size: 15px; color: #2a84c8; }
.eq { margin-right: 2px; margin-left: 1px; }
.finput { flex: 1; min-width: 0; height: 17px; padding-left: 3px; background: #fff; border: 1px solid #d3cfcb; }
.expand { width: 10px; height: 20px; }

.grid-area { display: flex; flex: 1; min-height: 0; }
.viewport { position: relative; flex: 1; min-width: 0; overflow: hidden; background: #fff; }
.vscroll { width: 10px; background: #cdcdcd; padding: 1px 2px; flex: none; }
.vscroll span { display: block; height: 48%; border-radius: 3px; background: #808080; }
.hscroll { height: 9px; padding-right: 10px; flex: none; }
.track { height: 9px; padding: 1px 2px; background: #cdcdcd; border-right: 2px solid #777; }
.track span { display: block; width: 47%; height: 7px; border-radius: 4px; background: #808080; }

/* Sheet */
.sheet { width: 100%; table-layout: fixed; border-collapse: separate; border-spacing: 0; }
.w22 { width: 22px; } .w162 { width: 162px; } .w86 { width: 86px; } .w19 { width: 19px; }
.w114 { width: 114px; } .w18 { width: 18px; } .w71 { width: 71px; } .w72 { width: 72px; }
.sheet td, .sheet th { padding: 0; overflow: hidden; white-space: nowrap; line-height: 12px; }
.sheet thead tr { height: 15px; }
.sheet thead th { background: #3584e4; color: #fff; font-weight: 700; border-right: 1px solid #2f77cf; border-bottom: 1px solid #dbe8f8; }
.sheet thead .plain { background: #dedddc; color: #555; font-weight: 400; border-right: 1px solid #bbb; }
.corner { background: #f6f5f4; }
.sheet tbody tr { height: 14px; }
.sheet tbody tr:nth-child(9n+4), .sheet tbody tr:nth-child(9n) { height: 13px; }
.sheet tbody tr.r1, .sheet tbody tr.r2 { height: 25px; }
.sheet tbody th { background: #dedddc; color: #444; font-weight: 400; border-right: 1px solid #bdbbb9; border-bottom: 1px solid #c4c2c0; }
.sheet tbody .sel { background: #3584e4; color: #fff; }

/* Spell-check squiggle: two rows of offset dashes */
.sheet u {
  text-decoration: none;
  background:
    repeating-linear-gradient(90deg, #e0383e 0 2px, transparent 2px 4px) 0 calc(100% - 1px) / 100% 1px no-repeat,
    repeating-linear-gradient(90deg, transparent 0 2px, #e0383e 2px 4px) 0 100% / 100% 1px no-repeat;
}
.sheet .title { position: relative; overflow: visible; padding-bottom: 2px; background: #1d4ed8; color: #fff; font-size: 14px; font-weight: 700; line-height: 20px; border: 1px solid #fff; border-left: 0; box-shadow: inset 0 -1px 0 #4a5568; }
.handle { position: absolute; right: -2px; bottom: -2px; width: 3px; height: 3px; background: #444; }
.sheet .r2 td { border-bottom: 1px solid #444; }
.sheet .r2 .note, .sheet .r2 .n { background: #e1f0fe; border-right: 1px solid #c9d8e6; }
.sheet .r2 .note { white-space: normal; color: #475569; font-size: 8px; line-height: 12px; }
.kh, .kv, .h, .m { text-align: center; }
.kh { background: #0f766e; color: #fff; font-size: 10px; font-weight: 700; border-right: 1px solid #5fa39e; }
.kv { background: #22c55e; color: #fff; font-weight: 700; border: solid #86d9a5; border-width: 0 1px 1px 0; }
.h { background: #14b8a6; color: #fff; font-weight: 700; border-right: 1px solid #8fd6ce; }
.c { color: #374151; border: solid #d3d9da; border-width: 0 1px 1px 0; }
.band { background: #effdfa; }
.gap { border-right: 1px solid #d3d9da; }
.more, .less { position: relative; }
.more::after { content: ""; position: absolute; right: 0; top: 3px; border: 3px solid transparent; border-left-color: #400; border-right: 0; }
.less::before { content: ""; position: absolute; left: 0; top: 4px; border: 3px solid transparent; border-right-color: #600; border-left: 0; z-index: 1; }
.less span { display: flex; justify-content: center; gap: 2px; }

/* Charts float over the cells */
.chart { position: absolute; top: 410px; font-family: Lato, sans-serif; }
.bars { left: 22px; }
.donut { left: 664px; }
.ct { font-size: 14px; font-weight: 700; text-anchor: middle; fill: #000; }
.ax { font-size: 8px; text-anchor: end; fill: #111; }
.yt { font-size: 8px; font-weight: 700; text-anchor: end; fill: #111; }
.lg { font-size: 8px; fill: #111; }

/* Sheet tabs */
.tabs { display: flex; height: 18px; font-size: 8px; flex: none; }
.navs { display: flex; padding-left: 6px; width: 74px; align-items: center; }
.navs button { width: 15px; }
.navs svg { width: 14px; height: 12px; }
.add { width: 14px; align-items: flex-start; margin-right: 4px; }
.add svg { width: 14px; height: 16px; }
.tablist { display: flex; align-items: stretch; }
.tablist button { padding: 0 9px; border-bottom: 2px solid transparent; background: linear-gradient(#c4c2c0, #c4c2c0) right center / 1px 9px no-repeat; }
.tablist .active { font-weight: 700; background: #fff; border-bottom-color: #8b8e8f; }

/* Sidebar */
.sidebar { position: relative; display: flex; flex-direction: column; align-items: center; gap: 9px; width: 39px; padding-top: 5px; border-left: 1px solid #d0cecc; flex: none; }
.sidebar > button { width: 24px; height: 20px; }
.sidebar svg { width: 18px; height: 18px; }
.sidebar .grip { position: absolute; left: -1px; top: 268px; width: 5px; height: 50px; background: #8f9392; }
.grip::before { content: ""; border: 2px solid transparent; border-left: 3px solid #fff; border-right: 0; }
.big { font-size: 18px; }

/* Status bar */
.status {
  display: grid;
  grid-template-columns: 21px 156fr 220fr 209fr 167fr 47fr 30px 20px 20px 182fr 97px 31px;
  align-items: center;
  height: 16px;
  border-top: 1px solid #d0cecc;
  font-size: 8px;
  flex: none;
}
.status .disk { padding-left: 6px; }
.cell { display: flex; align-items: center; height: 13px; padding-left: 6px; white-space: nowrap; overflow: hidden; }
.cell.line { border-left: 1px solid #dddbd9; }
.cell.mid { justify-content: center; padding: 0; }
.cell.pct { padding-left: 4px; }
.zoom { display: flex; align-items: center; border-left: 1px solid #dddbd9; padding: 0 5px 0 4px; }
.zoom button { width: 10px; height: 12px; }
.zoom input { appearance: none; flex: 1; min-width: 0; height: 8px; background: linear-gradient(#999, #999) center / 100% 1px no-repeat; }
.zoom input::-webkit-slider-thumb { appearance: none; width: 3px; height: 8px; background: #f6f5f4; border: 1px solid #444; }
```
